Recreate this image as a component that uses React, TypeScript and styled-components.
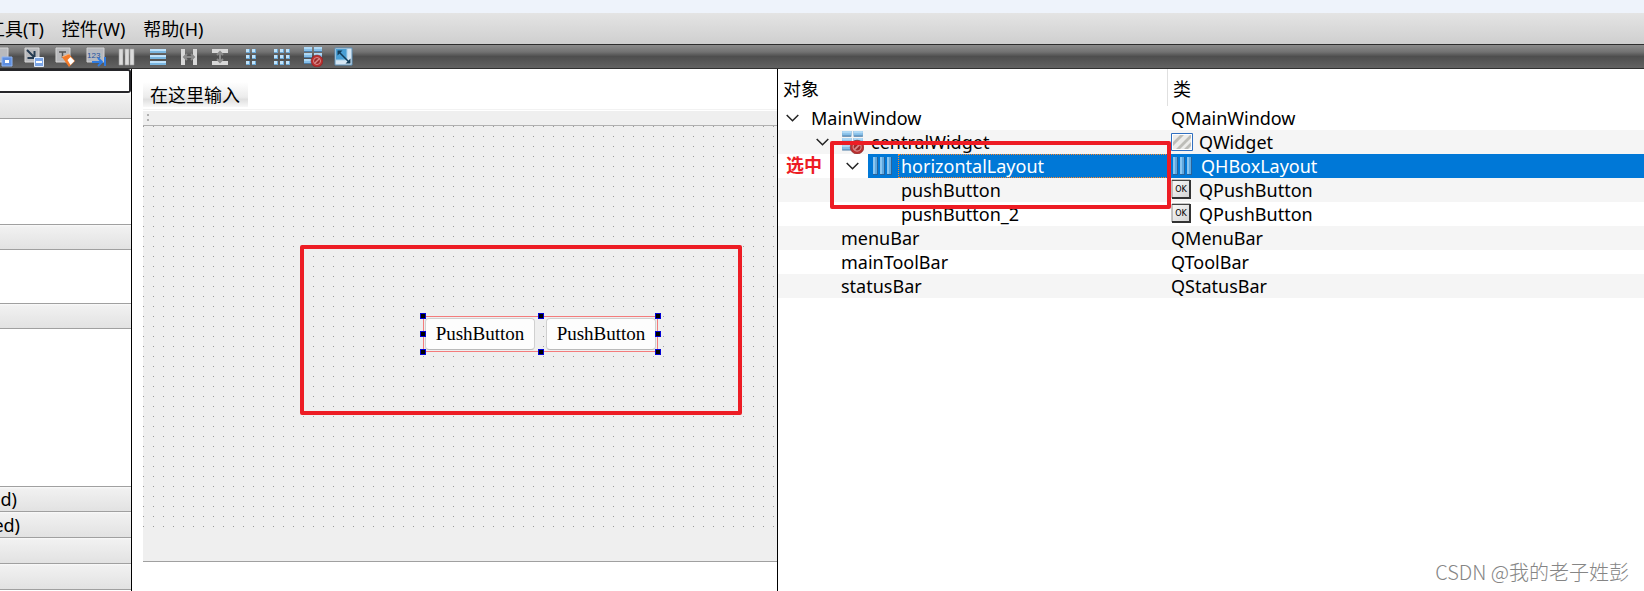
import React from "react";
import styled, { createGlobalStyle, css } from "styled-components";

const GlobalStyle = createGlobalStyle`
  *, *::before, *::after { box-sizing: border-box; }
  html, body, #root { height: 100%; }
  body {
    margin: 0;
    overflow: hidden;
    background: #fff;
    color: #000;
    font-family: "Noto Sans", "Noto Sans CJK SC", sans-serif;
    font-size: 18px;
    line-height: 24px;
  }
  button { font: inherit; color: inherit; border: 0; padding: 0; background: none; }
  svg { display: block; flex: none; }
`;

const RED = "#ed1c24";
const LINE = "#a0a0a0";

const Page = styled.div`
  height: 100%;
  display: flex;
  flex-direction: column;
  overflow: hidden;
`;

const TitleStrip = styled.div`
  flex: none;
  height: 13px;
  background: #eef3fb;
`;

const MenuBar = styled.nav`
  flex: none;
  height: 31px;
  display: flex;
  align-items: center;
  gap: 18px;
  margin-left: -13px;
  background: linear-gradient(#e4e4e4, #cfcfcf);
`;

const MenuItem = styled.button`
  white-space: nowrap;
`;

const ToolBar = styled.div`
  flex: none;
  height: 25px;
  display: flex;
  align-items: center;
  gap: 11px;
  margin-left: -7px;
  border-top: 1px solid #2e2e2e;
  border-bottom: 1px solid #303030;
  background: linear-gradient(#8c8c8c 0%, #727272 30%, #4e4e4e 50%, #626262 100%);
`;

const ToolButton = styled.button`
  width: 20px;
  height: 20px;
`;

const Workspace = styled.main`
  flex: 1;
  min-height: 0;
  display: grid;
  grid-template-columns: 132px minmax(0, 323fr) minmax(0, 433fr);
`;

const WidgetBox = styled.aside`
  border-right: 1px solid #000;
  overflow: hidden;
  display: flex;
  flex-direction: column;
`;

const Filter = styled.input`
  flex: none;
  height: 24px;
  width: 100%;
  border: 2px solid #26262a;
  border-left: 0;
  border-radius: 0 3px 3px 0;
  background: #fff;
  font: inherit;
  outline: none;
`;

const SectionHeader = styled.button<{ $ruled?: boolean }>`
  flex: none;
  height: 26px;
  width: 100%;
  overflow: hidden;
  display: flex;
  align-items: center;
  justify-content: flex-start;
  border-top: ${(p) => (p.$ruled ? `1px solid ${LINE}` : "0")};
  border-bottom: 1px solid ${LINE};
  background: linear-gradient(#fafafa, #f1f1f1 8%, #e2e2e2);
`;

const ClippedLabel = styled.span<{ $end: number }>`
  width: ${(p) => p.$end}px;
  display: flex;
  justify-content: flex-end;
  white-space: nowrap;
`;

const SectionBody = styled.div<{ $height: number }>`
  flex: none;
  height: ${(p) => p.$height}px;
`;

const FormPane = styled.section`
  border-right: 1px solid #000;
  padding: 13px 0 0 11px;
  display: flex;
  flex-direction: column;
  overflow: hidden;
`;

const TypeHere = styled.button`
  flex: none;
  align-self: flex-start;
  height: 25px;
  padding: 1px 8px 0 7px;
  background: linear-gradient(#fff, #ececec 60%, #e0e0e0 70%, #f8f8f8);
`;

const FormToolBar = styled.div`
  flex: none;
  height: 17px;
  margin-top: 2px;
  padding: 4px;
  border-top: 1px solid #f2f2f2;
  border-bottom: 1px solid #b0b0b0;
  background: linear-gradient(#fff 1px, #efefef 1px);
`;

const Grip = styled.div`
  width: 2px;
  height: 7px;
  border-top: 2px solid #b0b0b0;
  border-bottom: 2px solid #b0b0b0;
`;

const Canvas = styled.div`
  position: relative;
  flex: none;
  height: 401px;
  background-color: #efefef;
  background-image: linear-gradient(90deg, transparent 1px, #efefef 1px),
    linear-gradient(#999 1px, transparent 1px);
  background-size: 10px 10px;
`;

const StatusArea = styled.div`
  flex: none;
  height: 35px;
  background: #efefef;
  border-bottom: 1px solid ${LINE};
`;

const Marker = styled.div`
  position: absolute;
  border: 4px solid ${RED};
  border-radius: 2px;
  pointer-events: none;
`;

const CanvasMarker = styled(Marker)`
  left: 157px;
  top: 119px;
  width: 442px;
  height: 170px;
`;

const LayoutFrame = styled.div`
  position: absolute;
  left: 280px;
  top: 190px;
  width: 235px;
  height: 36px;
  display: flex;
  justify-content: space-between;
  padding: 1px;
  border: 1px solid #f47c7c;
`;

const PushButton = styled.button`
  width: 110px;
  height: 32px;
  border: 1px solid #d0d0d0;
  border-bottom-color: #bababa;
  border-radius: 4px;
  background: #fdfdfd;
  font-family: "Liberation Serif", serif;
  font-size: 19px;
  line-height: 24px;
`;

const Handle = styled.i<{ $x: string; $y: string }>`
  position: absolute;
  left: ${(p) => p.$x};
  top: ${(p) => p.$y};
  width: 6px;
  height: 6px;
  margin: -3px;
  border: 1px solid #0000d8;
  background: #000;
`;

const Inspector = styled.section`
  position: relative;
  overflow: hidden;
`;

const Tree = styled.table`
  width: 100%;
  table-layout: fixed;
  border-collapse: collapse;
  border-spacing: 0;
`;

const HeadCell = styled.th<{ $first?: boolean }>`
  height: 37px;
  padding: 2px 0 0 5px;
  width: ${(p) => (p.$first ? "390px" : "auto")};
  box-shadow: ${(p) => (p.$first ? "inset -1px 0 #e0e0e0" : "none")};
  font-weight: 400;
  text-align: left;
`;

const Row = styled.tr`
  height: 24px;
  &:nth-child(even) { background: #f5f5f5; }
`;

const Cell = styled.td`
  height: 24px;
  padding: 0;
`;

const NameLine = styled.div<{ $depth: number }>`
  height: 24px;
  display: flex;
  align-items: center;
  padding-left: ${(p) => p.$depth * 30}px;
`;

const Toggle = styled.button`
  width: 33px;
  height: 24px;
  padding-left: 8px;
`;

const Spacer = styled.span`
  width: 33px;
`;

const selected = css`
  background: #0078d7;
  color: #fff;
`;

const NameText = styled.span<{ $selected?: boolean }>`
  flex: 1;
  height: 24px;
  display: flex;
  align-items: center;
  margin-left: -3px;
  padding-left: 3px;
  ${(p) => p.$selected && selected}
`;

const NameIcon = styled.span`
  width: 30px;
  flex: none;
`;

const Label = styled.span<{ $focus?: boolean }>`
  flex: 1;
  height: 24px;
  line-height: 24px;
  ${(p) =>
    p.$focus &&
    css`
      outline: 1px dotted #ff8728;
      outline-offset: -1px;
      margin-left: -3px;
      padding-left: 3px;
    `}
`;

const ClassLine = styled.div<{ $selected?: boolean }>`
  height: 24px;
  display: flex;
  align-items: center;
  padding-left: 3px;
  ${(p) => p.$selected && selected}
`;

const ClassIcon = styled.span<{ $wide?: boolean }>`
  width: ${(p) => (p.$wide ? 30 : 28)}px;
  flex: none;
`;

const TreeMarker = styled(Marker)`
  left: 52px;
  top: 72px;
  width: 341px;
  height: 68px;
`;

const TreeNote = styled.strong`
  position: absolute;
  left: 8px;
  top: 84px;
  color: ${RED};
  font-weight: 700;
`;

const Watermark = styled.p`
  position: absolute;
  right: 15px;
  bottom: 7px;
  margin: 0;
  color: #858585;
  font-family: "Noto Sans CJK SC", sans-serif;
  font-size: 20px;
  font-weight: 300;
  line-height: 24px;
`;

const Icon = ({ children, size = 20 }: { children: React.ReactNode; size?: number }) => (
  <svg width={size} height={size} viewBox="0 0 20 20" aria-hidden="true">
    {children}
  </svg>
);

const Sheet = () => <path d="M1 1h14v14H1z" fill="#b9babd" stroke="#d6d6d6" />;

const SignalIcon = () => (
  <Icon>
    <Sheet />
    <path d="M9 10h10v9H9z" fill="#5f8fe0" stroke="#8fb4f2" />
    <path d="M12 13h4v3h-4z" fill="#fff" />
  </Icon>
);

const BuddyIcon = () => (
  <Icon>
    <Sheet />
    <path d="M3 3l7 7M10.500 4v7h-7" fill="none" stroke="#243b52" strokeWidth="2" />
    <path d="M10.500 10.500h9v9h-9z" fill="#7ba5e6" stroke="#e4eefc" />
    <path d="M12 15h6" stroke="#fff" strokeWidth="2" />
  </Icon>
);

const EditIcon = () => (
  <Icon>
    <Sheet />
    <path d="M4 5h7M7.500 5v6" fill="none" stroke="#555" strokeWidth="1.500" />
    <path d="M7 10l7-3 6 7-6 6z" fill="#f47b2a" />
    <path d="M12.500 13l3-3 4 4-4 4z" fill="#fff" />
    <path d="M7 10l7-3" stroke="#ffb27a" />
  </Icon>
);

const TabOrderIcon = () => (
  <Icon>
    <path d="M1 1h17v14H1z" fill="#b5b8bf" stroke="#d2d2d2" />
    <text x="1" y="11" fontSize="8" fontFamily="Liberation Sans, sans-serif" fill="#1f4f9c">
      123
    </text>
    <path d="M6 15h10M12 11l4 4-4 4M19 10v9" fill="none" stroke="#2f7be0" strokeWidth="2" />
  </Icon>
);

const ColumnsIcon = () => (
  <Icon>
    {[2, 8, 13].map((x) => (
      <path key={x} d={`M${x} 2h4v16h-4z`} fill="#dcdcdc" stroke="#9d9d9d" strokeWidth=".6" />
    ))}
  </Icon>
);

const RowsIcon = () => (
  <Icon>
    {[2, 8, 14].map((y) => (
      <g key={y}>
        <path d={`M2 ${y}h16v4h-16z`} fill="#7ab6e0" />
        <path d={`M2 ${y}h16v2h-16z`} fill="#bfe2fb" />
      </g>
    ))}
  </Icon>
);

const splitter = (
  <>
    <path d="M2 2h4v16H2zM14 2h4v16h-4z" fill="#d8d8d8" />
    <path d="M5 10h10M8 7l-3 3 3 3M12 7l3 3-3 3" fill="none" stroke="#8b8b8b" strokeWidth="2" />
  </>
);
const HSplitIcon = () => <Icon>{splitter}</Icon>;
const VSplitIcon = () => (
  <Icon>
    <g transform="rotate(90 10 10)">{splitter}</g>
  </Icon>
);

const Dots = ({ columns }: { columns: number[] }) => (
  <Icon>
    {columns.map((x) =>
      [2, 8, 14].map((y) => (
        <g key={`${x}-${y}`}>
          <path d={`M${x} ${y}h4v4h-4z`} fill="#6da9d6" />
          <path d={`M${x} ${y}h3v3h-3z`} fill="#bfe2fa" />
        </g>
      ))
    )}
  </Icon>
);

const BreakIcon = ({ size }: { size?: number }) => (
  <Icon size={size}>
    {[0, 6, 12].map((y) => (
      <g key={y}>
        <path d={`M1 ${y}h8v5H1zM11 ${y}h8v5h-8z`} fill="#4b7ba6" />
        <path d={`M1 ${y}h8v4H1zM11 ${y}h8v4h-8z`} fill="#86bfe8" />
        <path d={`M1 ${y}h8v2H1zM11 ${y}h8v2h-8z`} fill="#aed8f5" />
      </g>
    ))}
    <circle cx="14" cy="14" r="6" fill="#b92f2f" stroke="#7e2222" strokeWidth=".5" />
    <circle cx="14" cy="14" r="3.500" fill="#9c2a2a" stroke="#d98a8a" strokeWidth="1" />
    <path d="M11.500 16.500l5-5" stroke="#d98a8a" strokeWidth="1.500" />
  </Icon>
);

const AdjustIcon = () => (
  <Icon>
    <path d="M1 1h17v17H1z" fill="#d5e6f3" stroke="#5f91b8" />
    <path d="M2 2h11v11H2z" fill="#4a9fd4" />
    <path d="M13 2v11H2" fill="none" stroke="#a9d0ea" />
    <path d="M5 5l10 10" stroke="#123c58" strokeWidth="1.500" />
    <path d="M3.500 3.500h5l-5 5zM16.500 16.500h-5l5-5z" fill="#123c58" />
  </Icon>
);

const HBoxIcon = () => (
  <svg width="22" height="20" viewBox="0 0 22 20" aria-hidden="true">
    {[2, 9, 16].map((x) => (
      <g key={x}>
        <path d={`M${x} 1h5v18h-5z`} fill="#2a6299" />
        <path d={`M${x} 1h4v17h-4z`} fill="#5fa9e0" />
        <path d={`M${x} 1h2v17h-2z`} fill="#8cc6f0" />
      </g>
    ))}
  </svg>
);

const WidgetIcon = () => (
  <svg width="22" height="18" viewBox="0 0 22 18" aria-hidden="true">
    <path d="M.5.500h21v17H.5z" fill="#fff" stroke="#2f6fc0" />
    <path d="M2 2h18v14H2z" fill="#ececea" />
    <path d="M2 9l7-7h4L2 13zM5 16L19 2h1v3L9 16zM13 16l7-7v4l-3 3z" fill="#bdbdb8" />
  </svg>
);

const OkIcon = () => (
  <svg width="20" height="22" viewBox="0 0 20 22" aria-hidden="true">
    <defs>
      <linearGradient id="okFace" x1="0" y1="0" x2="1" y2="1">
        <stop offset="0" stopColor="#fafafa" />
        <stop offset="1" stopColor="#d2d2d2" />
      </linearGradient>
    </defs>
    <path d="M1 1h18v18H1z" fill="url(#okFace)" stroke="#8a8a8a" />
    <path d="M1 1.500h18" stroke="#444" />
    <path d="M19 1v18H1" fill="none" stroke="#333" strokeWidth="2" />
    <text x="10" y="13" fontSize="8" textAnchor="middle" fontFamily="DejaVu Sans, sans-serif" fill="#000">
      OK
    </text>
  </svg>
);

const Chevron = () => (
  <svg width="13" height="8" viewBox="0 0 13 8" aria-hidden="true">
    <path d="M.7 1l5.800 5.800L12.300 1" fill="none" stroke="#222" strokeWidth="1.500" />
  </svg>
);

const tools: [string, React.ReactNode][] = [
  ["编辑信号/槽", <SignalIcon />],
  ["编辑伙伴", <BuddyIcon />],
  ["编辑控件", <EditIcon />],
  ["编辑Tab顺序", <TabOrderIcon />],
  ["水平布局", <ColumnsIcon />],
  ["垂直布局", <RowsIcon />],
  ["使用分裂器水平布局", <HSplitIcon />],
  ["使用分裂器垂直布局", <VSplitIcon />],
  ["在窗体布局中布局", <Dots columns={[5, 11]} />],
  ["栅格布局", <Dots columns={[2, 8, 14]} />],
  ["打破布局", <BreakIcon />],
  ["调整大小", <AdjustIcon />],
];

type Node = {
  name: string;
  type: string;
  depth: number;
  open?: boolean;
  selected?: boolean;
  icon?: React.ReactNode;
  typeIcon?: React.ReactNode;
};

const nodes: Node[] = [
  { name: "MainWindow", type: "QMainWindow", depth: 0, open: true },
  { name: "centralWidget", type: "QWidget", depth: 1, open: true, icon: <BreakIcon size={23} />, typeIcon: <WidgetIcon /> },
  { name: "horizontalLayout", type: "QHBoxLayout", depth: 2, open: true, selected: true, icon: <HBoxIcon />, typeIcon: <HBoxIcon /> },
  { name: "pushButton", type: "QPushButton", depth: 3, typeIcon: <OkIcon /> },
  { name: "pushButton_2", type: "QPushButton", depth: 3, typeIcon: <OkIcon /> },
  { name: "menuBar", type: "QMenuBar", depth: 1 },
  { name: "mainToolBar", type: "QToolBar", depth: 1 },
  { name: "statusBar", type: "QStatusBar", depth: 1 },
];

const FAR = "calc(100% + 1px)";
const handles: [string, string][] = [
  ["-1px", "-1px"], ["50%", "-1px"], [FAR, "-1px"],
  ["-1px", "50%"], [FAR, "50%"],
  ["-1px", FAR], ["50%", FAR], [FAR, FAR],
];

export default function App() {
  return (
    <Page>
      <GlobalStyle />
      <TitleStrip />
      <MenuBar>
        <MenuItem>工具(T)</MenuItem>
        <MenuItem>控件(W)</MenuItem>
        <MenuItem>帮助(H)</MenuItem>
      </MenuBar>
      <ToolBar role="toolbar">
        {tools.map(([label, icon]) => (
          <ToolButton key={label} aria-label={label}>
            {icon}
          </ToolButton>
        ))}
      </ToolBar>
      <Workspace>
        <WidgetBox>
          <Filter aria-label="Filter" />
          <SectionHeader aria-label="Layouts" />
          <SectionBody $height={105} />
          <SectionHeader aria-label="Spacers" $ruled />
          <SectionBody $height={53} />
          <SectionHeader aria-label="Buttons" $ruled />
          <SectionBody $height={157} />
          <SectionHeader $ruled>
            <ClippedLabel $end={17}>d)</ClippedLabel>
          </SectionHeader>
          <SectionHeader>
            <ClippedLabel $end={20}>ed)</ClippedLabel>
          </SectionHeader>
          <SectionHeader aria-label="Containers" />
          <SectionHeader aria-label="Input Widgets" />
        </WidgetBox>
        <FormPane>
          <TypeHere>在这里输入</TypeHere>
          <FormToolBar>
            <Grip />
          </FormToolBar>
          <Canvas>
            <LayoutFrame>
              <PushButton>PushButton</PushButton>
              <PushButton>PushButton</PushButton>
              {handles.map(([x, y]) => (
                <Handle key={x + y} $x={x} $y={y} />
              ))}
            </LayoutFrame>
            <CanvasMarker />
          </Canvas>
          <StatusArea />
        </FormPane>
        <Inspector>
          <Tree>
            <thead>
              <tr>
                <HeadCell $first>对象</HeadCell>
                <HeadCell>类</HeadCell>
              </tr>
            </thead>
            <tbody>
              {nodes.map((n) => (
                <Row key={n.name}>
                  <Cell>
                    <NameLine $depth={n.depth}>
                      {n.open ? (
                        <Toggle aria-label={`Collapse ${n.name}`} aria-expanded>
                          <Chevron />
                        </Toggle>
                      ) : (
                        <Spacer />
                      )}
                      <NameText $selected={n.selected}>
                        {n.icon && <NameIcon>{n.icon}</NameIcon>}
                        <Label $focus={n.selected}>{n.name}</Label>
                      </NameText>
                    </NameLine>
                  </Cell>
                  <Cell>
                    <ClassLine $selected={n.selected}>
                      {n.typeIcon && <ClassIcon $wide={n.selected}>{n.typeIcon}</ClassIcon>}
                      {n.type}
                    </ClassLine>
                  </Cell>
                </Row>
              ))}
            </tbody>
          </Tree>
          <TreeMarker />
          <TreeNote>选中</TreeNote>
          <Watermark>CSDN @我的老子姓彭</Watermark>
        </Inspector>
      </Workspace>
    </Page>
  );
}
